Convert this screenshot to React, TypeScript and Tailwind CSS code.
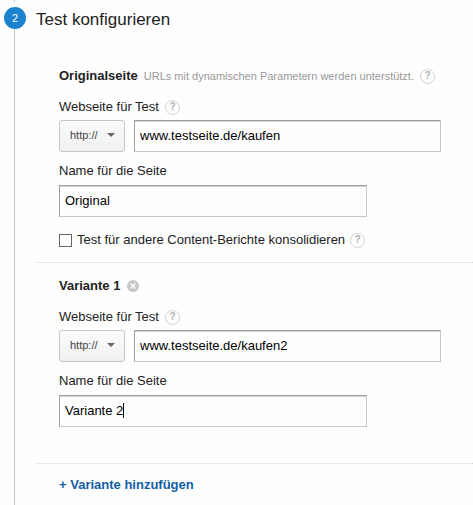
import { useState, type ReactNode } from 'react';

const inputClass =
  'block h-8 w-full border border-[#c6c6c6] border-t-[#a0a0a0] border-l-[#a0a0a0] bg-[#fefefe] px-[5px] pb-0.5 text-[13px] text-black shadow-[inset_0_1px_0_#d4d4d4] outline-none';

function Help({ label }: { label: string }) {
  return (
    <button
      type="button"
      aria-label={label}
      className="flex size-[15px] shrink-0 items-center justify-center rounded-full border border-[#d2d2d2] text-[10px] leading-none font-bold text-[#b0b0b0]"
    >
      ?
    </button>
  );
}

function UrlField({ id, value }: { id: string; value: string }) {
  const [url, setUrl] = useState(value);

  return (
    <div className="mt-[11px]">
      <div className="flex h-5 items-center gap-1.5">
        <label htmlFor={id}>Webseite für Test</label>
        <Help label="Hilfe" />
      </div>
      <div className="mt-[3px] flex gap-[9px]">
        <div className="relative w-[66px] shrink-0">
          <select
            aria-label="Protokoll"
            className="h-8 w-full appearance-none rounded-[3px] border border-[#c6c6c6] bg-linear-to-b from-[#fbfbfb] to-[#eff1f0] pb-0.5 pl-2.5 text-[11px] text-[#444] outline-none"
          >
            <option>http://</option>
            <option>https://</option>
          </select>
          <svg
            viewBox="0 0 8 4"
            className="pointer-events-none absolute top-[13px] right-2.5 h-1 w-2 fill-[#666]"
          >
            <path d="M0 0h8L4 4z" />
          </svg>
        </div>
        <div className="max-w-[307px] flex-1">
          <input
            id={id}
            type="text"
            value={url}
            onChange={(e) => setUrl(e.target.value)}
            className={inputClass}
          />
        </div>
      </div>
    </div>
  );
}

interface NameProps {
  id: string;
  value: string;
  caret?: boolean;
}

function NameField({ id, value, caret }: NameProps) {
  const [name, setName] = useState(value);
  const [touched, setTouched] = useState(false);

  return (
    <div className="mt-[9px]">
      <label htmlFor={id} className="flex h-5 items-center">
        Name für die Seite
      </label>
      <div className="relative mt-1 max-w-[308px]">
        <input
          id={id}
          type="text"
          value={name}
          onFocus={() => setTouched(true)}
          onChange={(e) => setName(e.target.value)}
          className={inputClass}
        />
        {caret && !touched && (
          <span className="pointer-events-none absolute top-2 left-16 h-[15px] w-px bg-black" />
        )}
      </div>
    </div>
  );
}

function Section({ className, children }: { className: string; children: ReactNode }) {
  return (
    <section className={`border-b border-dotted border-[#d0d0d0] pl-[23px] pr-8 ${className}`}>
      {children}
    </section>
  );
}

export default function App() {
  return (
    <main className="flex min-h-screen bg-[#fefefe] font-['Liberation_Sans',Arial,sans-serif] text-[13px] text-[#222]">
      <div className="flex w-9 shrink-0 flex-col items-start pl-1">
        <div className="flex w-[22px] flex-1 flex-col items-center">
          <span className="mr-px h-[2px] w-px bg-[#c4c4c4]" />
          <span className="mt-[5px] flex size-[22px] items-center justify-center rounded-full bg-[#1a82cf] text-[11px] text-white">
            2
          </span>
          <span className="mr-px w-px flex-1 bg-[#c4c4c4]" />
        </div>
      </div>

      <div className="min-w-0 flex-1">
        <h1 className="mt-2 flex h-6 items-center text-[17px]">Test konfigurieren</h1>

        <Section className="mt-[34px] pb-3">
          <div className="flex h-5 items-center gap-1.5 whitespace-nowrap">
            <h2 className="font-bold">Originalseite</h2>
            <span className="text-[11px] text-[#999]">
              URLs mit dynamischen Parametern werden unterstützt.
            </span>
            <Help label="Hilfe zur Originalseite" />
          </div>
          <UrlField id="url-original" value="www.testseite.de/kaufen" />
          <NameField id="name-original" value="Original" />
          <div className="mt-[13px] flex h-5 items-center gap-[5px]">
            <input
              id="consolidate"
              type="checkbox"
              className="size-[13px] shrink-0 appearance-none border border-[#666] bg-white checked:bg-[#666]"
            />
            <label htmlFor="consolidate">Test für andere Content-Berichte konsolidieren</label>
            <Help label="Hilfe zur Konsolidierung" />
          </div>
        </Section>

        <Section className="pt-[13px] pb-9">
          <div className="flex h-5 items-center gap-[7px]">
            <h2 className="font-bold">Variante 1</h2>
            <button type="button" aria-label="Variante entfernen">
              <svg viewBox="0 0 12 12" className="size-3">
                <circle cx="6" cy="6" r="6" fill="#c6c6c6" />
                <path d="M3.5 3.5l5 5M8.5 3.5l-5 5" stroke="#fff" strokeWidth="1.4" />
              </svg>
            </button>
          </div>
          <UrlField id="url-variant" value="www.testseite.de/kaufen2" />
          <NameField id="name-variant" value="Variante 2" caret />
        </Section>

        <div className="flex pt-[11px] pb-2 pl-[23px]">
          <a href="#variante" className="flex h-5 items-center font-bold text-[#125ea5]">
            + Variante hinzufügen
          </a>
        </div>
      </div>
    </main>
  );
}
